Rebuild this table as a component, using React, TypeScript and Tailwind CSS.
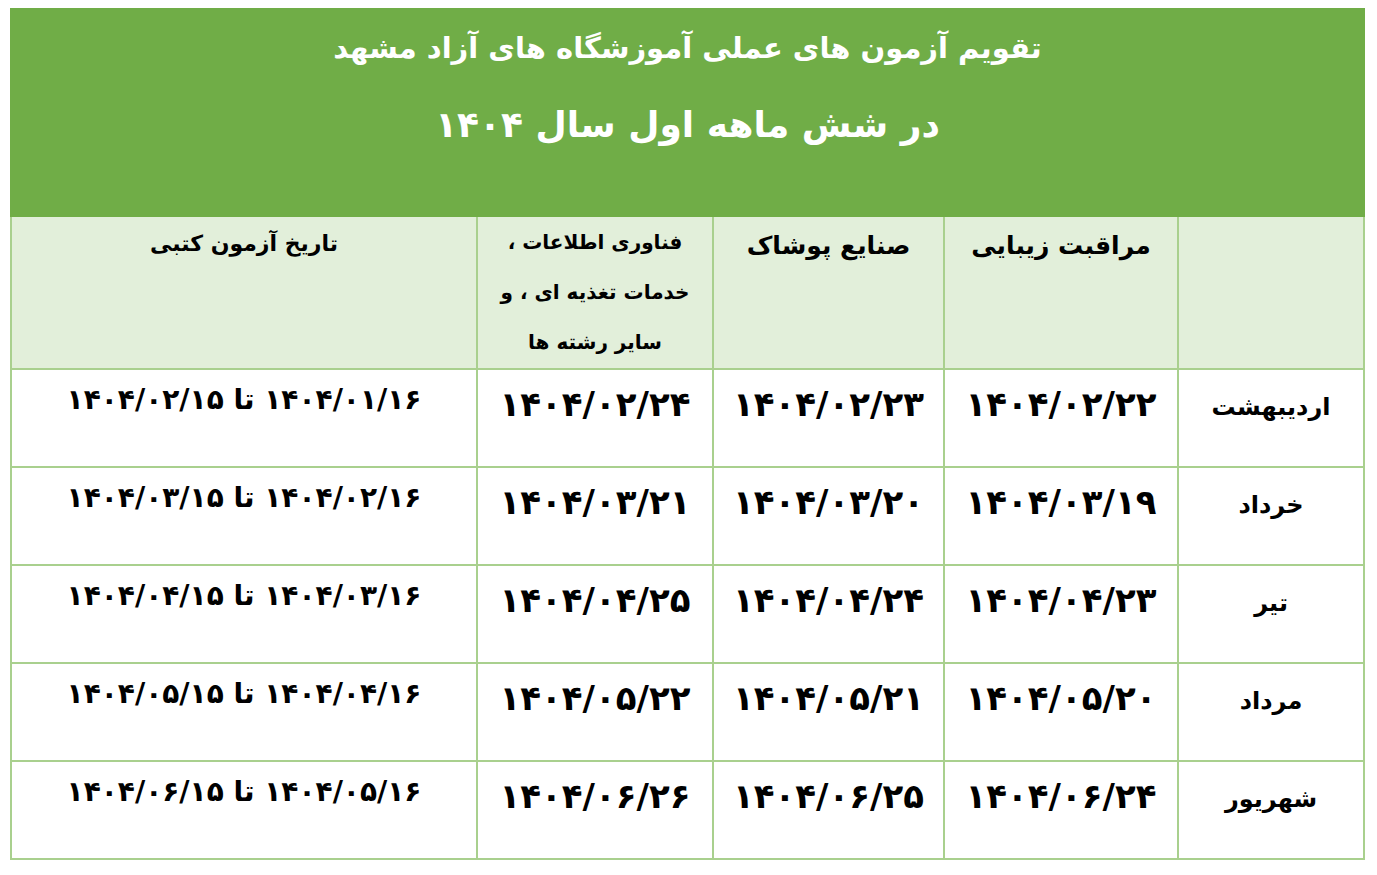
const rows = [
  { month: 'اردیبهشت', a: '۱۴۰۴/۰۲/۲۲', b: '۱۴۰۴/۰۲/۲۳', c: '۱۴۰۴/۰۲/۲۴', range: '۱۴۰۴/۰۱/۱۶ تا ۱۴۰۴/۰۲/۱۵' },
  { month: 'خرداد', a: '۱۴۰۴/۰۳/۱۹', b: '۱۴۰۴/۰۳/۲۰', c: '۱۴۰۴/۰۳/۲۱', range: '۱۴۰۴/۰۲/۱۶ تا ۱۴۰۴/۰۳/۱۵' },
  { month: 'تیر', a: '۱۴۰۴/۰۴/۲۳', b: '۱۴۰۴/۰۴/۲۴', c: '۱۴۰۴/۰۴/۲۵', range: '۱۴۰۴/۰۳/۱۶ تا ۱۴۰۴/۰۴/۱۵' },
  { month: 'مرداد', a: '۱۴۰۴/۰۵/۲۰', b: '۱۴۰۴/۰۵/۲۱', c: '۱۴۰۴/۰۵/۲۲', range: '۱۴۰۴/۰۴/۱۶ تا ۱۴۰۴/۰۵/۱۵' },
  { month: 'شهریور', a: '۱۴۰۴/۰۶/۲۴', b: '۱۴۰۴/۰۶/۲۵', c: '۱۴۰۴/۰۶/۲۶', range: '۱۴۰۴/۰۵/۱۶ تا ۱۴۰۴/۰۶/۱۵' },
];

const font = { fontFamily: '"DejaVu Sans", sans-serif' };

export default function App() {
  return (
    <div className="bg-white w-[1377px] h-[875px] pt-2 pl-[10px]" style={font}>
      <table dir="rtl" className="w-[1353px] border-collapse table-fixed text-black font-bold">
        <colgroup>
          <col className="w-[186px]" />
          <col className="w-[234px]" />
          <col className="w-[231px]" />
          <col className="w-[236px]" />
          <col className="w-[466px]" />
        </colgroup>
        <thead>
          {/* green title band */}
          <tr>
            <td colSpan={5} className="h-[207px] bg-[#70ad47] border-2 border-[#70ad47] align-top text-center text-white">
              <div className="pt-[18px] text-[29px] leading-[40px]">تقویم آزمون های عملی آموزشگاه های آزاد مشهد</div>
              <div className="mt-[32px] text-[36px] leading-[50px]">در شش ماهه اول سال ۱۴۰۴</div>
            </td>
          </tr>
          <tr className="bg-[#e2efda] h-[153px]">
            <th className="border-2 border-[#a9d08e]"></th>
            <th className="border-2 border-[#a9d08e] align-top pt-[12px] text-[25px] leading-[34px] font-bold">مراقبت زیبایی</th>
            <th className="border-2 border-[#a9d08e] align-top pt-[12px] text-[25px] leading-[34px] font-bold">صنایع پوشاک</th>
            <th className="border-2 border-[#a9d08e] align-top pt-0 text-[20px] leading-[50px] font-bold">
              فناوری اطلاعات ،
              <br />
              خدمات تغذیه ای ، و
              <br />
              سایر رشته ها
            </th>
            <th className="border-2 border-[#a9d08e] align-top pt-[12px] text-[22px] leading-[30px] font-bold">تاریخ آزمون کتبی</th>
          </tr>
        </thead>
        <tbody>
          {rows.map((r) => (
            <tr key={r.month} className="h-[98px]">
              <td className="border-2 border-[#a9d08e] align-top text-center pt-[19px] text-[24px] leading-[36px]">{r.month}</td>
              <td className="border-2 border-[#a9d08e] align-top text-center pt-[12px] text-[34px] leading-[44px]">{r.a}</td>
              <td className="border-2 border-[#a9d08e] align-top text-center pt-[12px] text-[34px] leading-[44px]">{r.b}</td>
              <td className="border-2 border-[#a9d08e] align-top text-center pt-[12px] text-[34px] leading-[44px]">{r.c}</td>
              <td className="border-2 border-[#a9d08e] align-top text-center pt-[10px] text-[28px] leading-[40px]">{r.range}</td>
            </tr>
          ))}
        </tbody>
      </table>
    </div>
  );
}
